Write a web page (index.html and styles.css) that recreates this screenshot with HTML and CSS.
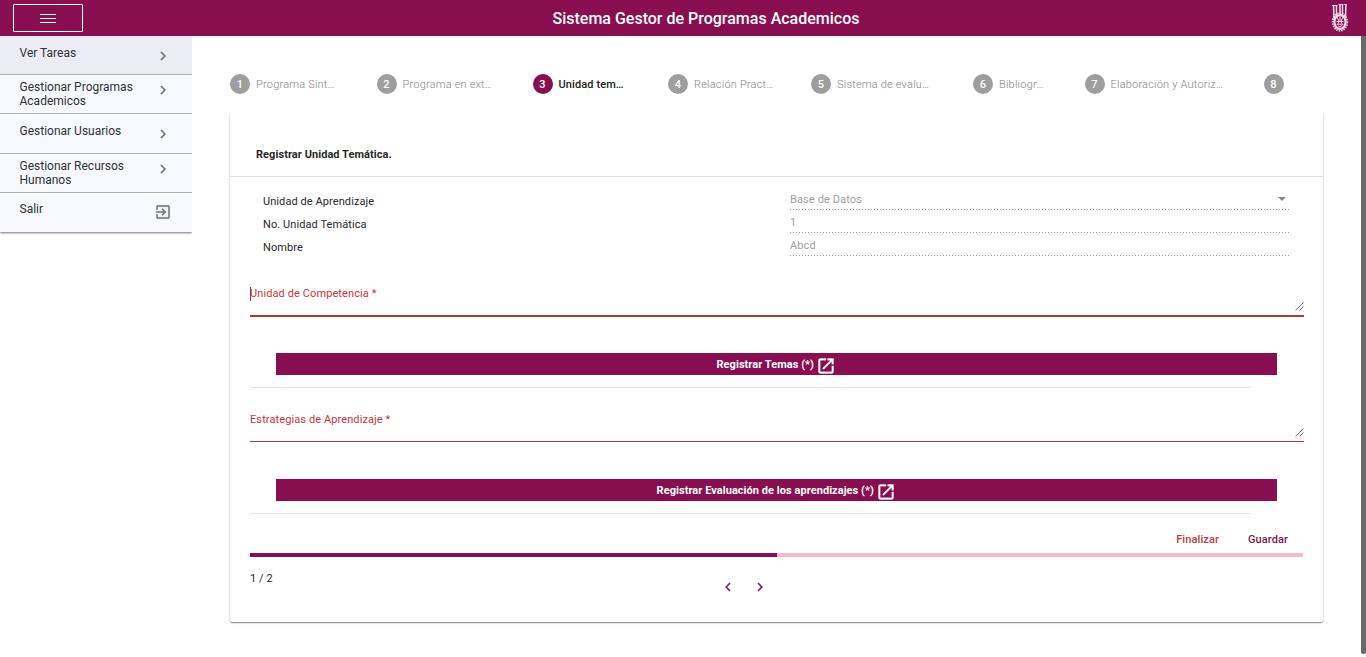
FILE: index.html
```
<!DOCTYPE html>
<html lang="es">
<head>
<meta charset="utf-8">
<title>Sistema Gestor de Programas Academicos</title>
<link rel="stylesheet" href="styles.css">
</head>
<body>
<svg class="defs" width="0" height="0">
  <symbol id="chevron" viewBox="0 0 24 24"><path d="M10 6L8.590 7.410 13.170 12l-4.580 4.590L10 18l6-6z"/></symbol>
  <symbol id="exit" viewBox="0 0 24 24"><path d="M10.090 15.590L11.500 17l5-5-5-5-1.410 1.410L12.670 11H3v2h9.670l-2.580 2.590zM19 3H5c-1.110 0-2 .9-2 2v4h2V5h14v14H5v-4H3v4c0 1.100.89 2 2 2h14c1.100 0 2-.9 2-2V5c0-1.100-.9-2-2-2z"/></symbol>
  <symbol id="open" viewBox="0 0 24 24"><path d="M19 19H5V5h7V3H5c-1.110 0-2 .9-2 2v14c0 1.100.89 2 2 2h14c1.100 0 2-.9 2-2v-7h-2v7zM14 3v2h3.590l-9.830 9.830 1.410 1.410L19 6.410V10h2V3h-7z"/></symbol>
  <symbol id="grip" viewBox="0 0 9 9"><path d="M.5 8.500l8-8M4.500 8.500l4-4"/></symbol>
</svg>
<header class="topbar">
  <button class="menu-btn" aria-label="Menu"><svg width="16" height="10" viewBox="0 0 16 10"><path d="M0 .5h16M0 4.500h16M0 8.500h16"/></svg></button>
  <h1 class="title">Sistema Gestor de Programas Academicos</h1>
  <svg class="logo" width="18" height="30" viewBox="0 0 18 30">
    <path class="logo-bars" d="M2.500 2l.5 14M5.500 2v12M9 1v12M11.500 1v12M15 1l-.5 14"/>
    <path class="logo-top" d="M1 2.500h5.500M7.500 1.500h4.500M13 1.500h3"/>
    <ellipse class="logo-teeth" cx="9" cy="19" rx="7.400" ry="8.800"/>
    <ellipse class="logo-ring" cx="9" cy="19" rx="5.600" ry="7"/>
    <path class="logo-detail" d="M5.500 13l2.500 5M12.500 13l-2.500 5M5.500 18.500h7M9 11v8M6 22l2-3M12 22l-2-3"/>
    <circle class="logo-hub" cx="9" cy="22.500" r="1.500"/>
  </svg>
</header>
<div class="layout">
  <nav class="sidebar">
    <a class="nav-item active"><span>Ver Tareas</span><svg class="chev"><use href="#chevron"/></svg></a>
    <a class="nav-item two-line"><span>Gestionar Programas Academicos</span><svg class="chev"><use href="#chevron"/></svg></a>
    <a class="nav-item tall"><span>Gestionar Usuarios</span><svg class="chev"><use href="#chevron"/></svg></a>
    <a class="nav-item two-line"><span>Gestionar Recursos Humanos</span><svg class="chev"><use href="#chevron"/></svg></a>
    <a class="nav-item last"><span>Salir</span><svg class="chev exit"><use href="#exit"/></svg></a>
  </nav>
  <main class="content">
    <ol class="steps">
      <li class="step"><b>1</b><span>Programa Sint…</span></li>
      <li class="step"><b>2</b><span>Programa en ext…</span></li>
      <li class="step current"><b>3</b><span>Unidad tem…</span></li>
      <li class="step"><b>4</b><span>Relación Pract…</span></li>
      <li class="step"><b>5</b><span>Sistema de evalu…</span></li>
      <li class="step"><b>6</b><span>Bibliogr…</span></li>
      <li class="step"><b>7</b><span>Elaboración y Autoriz…</span></li>
      <li class="step"><b>8</b></li>
    </ol>
    <section class="card">
      <h2 class="card-title">Registrar Unidad Temática.</h2>
      <div class="fields">
        <div class="field"><span class="name">Unidad de Aprendizaje</span><span class="value">Base de Datos<i class="caret-down"></i></span></div>
        <div class="field"><span class="name">No. Unidad Temática</span><span class="value">1</span></div>
        <div class="field"><span class="name">Nombre</span><span class="value">Abcd</span></div>
      </div>
      <div class="form">
        <div class="area focused"><label>Unidad de Competencia *</label><svg class="grip"><use href="#grip"/></svg></div>
        <button class="wide-btn">Registrar Temas (*)<svg><use href="#open"/></svg></button>
        <div class="rule"></div>
        <div class="area"><label>Estrategias de Aprendizaje *</label><svg class="grip"><use href="#grip"/></svg></div>
        <button class="wide-btn second">Registrar Evaluación de los aprendizajes (*)<svg><use href="#open"/></svg></button>
        <div class="rule"></div>
        <div class="actions"><span class="warn">Finalizar</span><span class="primary">Guardar</span></div>
        <div class="progress"><div class="bar"></div></div>
        <div class="pager"><span class="count">1 / 2</span><div class="arrows"><svg class="prev"><use href="#chevron"/></svg><svg><use href="#chevron"/></svg></div></div>
      </div>
    </section>
  </main>
  <div class="scrollbar"><div class="thumb"></div></div>
</div>
</body>
</html>
```
FILE: styles.css
```
* { box-sizing: border-box; }
body { margin: 0; height: 657px; overflow: hidden; background: #fff; font: 11px/14px Roboto, "Noto Sans", sans-serif; letter-spacing: .08px; color: #2a2a2a; }
h1, h2, ol { margin: 0; padding: 0; }
button { font: inherit; letter-spacing: inherit; padding: 0; border: 0; }
.defs { display: block; width: 0; height: 0; }
.topbar { height: 36px; background: #880e4f; display: grid; grid-template-columns: 70px 1fr 70px; align-items: center; padding: 0 13px; }
.menu-btn { width: 70px; height: 28px; border: 1px solid #fff; border-radius: 1px; background: none; display: flex; align-items: center; justify-content: center; }
.menu-btn svg { fill: none; stroke: #fff; margin-top: 2px; }
.title { color: #fff; font-size: 16px; line-height: 20px; font-weight: 500; letter-spacing: 0; text-align: center; margin-left: 46px; padding-top: 2px; }
.logo { justify-self: end; margin-right: 4px; fill: none; stroke: #f8dce9; }
.logo-bars { stroke-width: 1.500; }
.logo-teeth { stroke-width: 1.600; stroke-dasharray: 1.500 1; }
.logo-ring { stroke-width: 2.200; }
.logo-hub { fill: #880e4f; stroke-width: 1; }
.layout { display: grid; grid-template-columns: 192px 1fr 5px; height: 621px; }
.sidebar { align-self: start; background: #f8f9ff; box-shadow: 0 1px 2px rgba(0,0,0,.55); color: #303034; font-size: 12px; line-height: 14px; letter-spacing: 0; clip-path: inset(0 0 -5px 0); }
.nav-item { display: flex; justify-content: space-between; height: 39px; padding: 10px 20px 0 19.500px; border-bottom: 1px solid #aeb0b5; }
.nav-item span { width: 125px; }
.nav-item.active { background: #ececf5; }
.nav-item.two-line { padding-top: 5px; }
.nav-item.tall { height: 40px; }
.nav-item.last { border-bottom: 0; padding-top: 9px; }
.chev { width: 18px; height: 18px; fill: #777; margin-top: .5px; stroke: #777; stroke-width: .3; }
.content { padding: 38px 38px 0; }
.steps { list-style: none; display: grid; grid-template-columns: 146.500px 156px 135.500px 143px 162px 111.500px 179px 20px; height: 39px; }
.step { display: flex; gap: 6px; height: 20px; align-items: center; white-space: nowrap; font-weight: 300; letter-spacing: .2px; color: #858585; }
.step span { padding-top: 1px; }
.step b { width: 20px; height: 20px; border-radius: 50%; background: #9e9e9e; color: #fff; line-height: 21px; text-align: center; font-weight: 500; letter-spacing: 0; }
.step.current { color: #222; font-weight: 500; letter-spacing: .1px; }
.step.current b { background: #880e4f; }
.card { width: 1093px; height: 509px; background: #fff; box-shadow: 0 1px 1.500px rgba(0,0,0,.5); clip-path: inset(0 -4px -5px -4px); border-radius: 2px; }
.card-title { height: 64px; padding: 35px 26px 0; border-bottom: 1px solid #e0e0e0; font-size: 11px; line-height: 14px; font-weight: 700; letter-spacing: .06px; }
.fields { padding: 11px 35px 0 33px; }
.field { display: grid; grid-template-columns: 527px 499px; height: 23px; }
.name { padding-top: 7px; }
.value { display: flex; justify-content: space-between; height: 22px; padding: 5px 3px 0 0; color: #a0a0a0; background: repeating-linear-gradient(90deg,#999 0 1px,transparent 1px 3px) left 21px / 100% 1px no-repeat; letter-spacing: .12px; }
.caret-down { width: 8px; border: 4px solid transparent; border-top-color: #8a8a8a; height: 4px; margin-top: 4px; }
.form { padding: 30px 19px 0 20px; }
.area { display: flex; justify-content: space-between; height: 29px; border-bottom: 1px solid #b5383c; color: #c9353a; letter-spacing: .1px; }
.area.focused { height: 30px; border-bottom: 2px solid #b0383d; }
.area.focused label { height: 14px; box-shadow: inset 1px 0 #a32c32; }
.grip { width: 9px; height: 9px; margin-top: 15px; fill: none; stroke: #555; stroke-width: .8; }
.wide-btn { display: flex; align-items: center; justify-content: center; width: 1001px; height: 22px; margin: 36px 0 0 26px; padding-top: 2px; background: #880e4f; color: #fff; font-weight: 700; letter-spacing: .05px; }
.wide-btn.second { margin-top: 37px; }
.wide-btn svg { width: 20px; height: 20px; margin: 2px 0 0 2.500px; fill: #fff; stroke: #fff; stroke-width: .4; }
.rule { width: 1001px; height: 1px; margin-top: 12px; background: #e3e3e3; }
.rule + .area { margin-top: 25px; }
.actions { display: flex; justify-content: flex-end; gap: 29px; height: 39px; padding: 19px 16px 0 0; font-weight: 500; letter-spacing: .1px; }
.warn { color: #c0393d; }
.primary { color: #7b1751; }
.progress { width: 1053px; height: 4px; background: #f4bbd0; }
.bar { width: 527px; height: 4px; background: #7f1550; }
.pager { display: grid; grid-template-columns: 469px 1fr; padding-top: 15px; }
.arrows { display: flex; gap: 14px; margin-top: 6px; }
.arrows svg { width: 18px; height: 18px; fill: #7b1751; }
.arrows .prev { transform: scaleX(-1); }
.thumb { height: 618px; background: #686868; border-radius: 0 0 3px 3px; }
```
